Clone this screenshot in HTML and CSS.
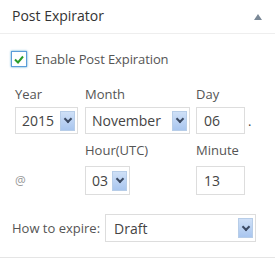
FILE: index.html
```html
<!DOCTYPE html>
<html lang="en">
<head>
    <meta charset="UTF-8">
    <title>Post Expirator</title>
    <link rel="stylesheet" href="styles.css">
</head>
<body>
    <div class="postbox">
        <div class="hndle">
            <h3>Post Expirator</h3>
            <span class="toggle"></span>
        </div>
        <div class="inside">
            <label class="enable">
                <span class="check">
                    <svg width="10" height="9" viewBox="0 0 10 9"><path d="M1 4.5 L4 7.5 L9 1.5" fill="none" stroke="#2a9d2a" stroke-width="2"/></svg>
                </span>
                Enable Post Expiration
            </label>
            <div class="date-grid">
                <div class="lbl">Year</div>
                <div class="lbl">Month</div>
                <div class="lbl">Day</div>

                <div class="select year"><span class="val">2015</span><span class="arrow"></span></div>
                <div class="select month"><span class="val">November</span><span class="arrow"></span></div>
                <div class="day-cell"><div class="input">06</div><span class="dot">.</span></div>

                <div class="lbl second"></div>
                <div class="lbl second">Hour(UTC)</div>
                <div class="lbl second">Minute</div>

                <div class="at">@</div>
                <div class="select hour"><span class="val">03</span><span class="arrow"></span></div>
                <div class="input">13</div>
            </div>
            <div class="how">
                <span class="how-lbl">How to expire:</span>
                <div class="select how-sel"><span class="val">Draft</span><span class="arrow"></span></div>
            </div>
        </div>
    </div>
</body>
</html>
```

FILE: styles.css
```css
body {
    margin: 0;
    background: #fff;
    font-family: "Open Sans", sans-serif;
    color: #444;
}
.postbox {
    width: 275px;
    height: 257px;
    border-bottom: 1px solid #e5e5e5;
}
.hndle {
    height: 34px;
    border-bottom: 1px solid #eee;
    display: flex;
    align-items: center;
    justify-content: space-between;
    padding: 0 12px;
    box-sizing: border-box;
}
.hndle h3 {
    margin: 0;
    font-size: 14px;
    font-weight: 400;
    color: #333;
    position: relative;
    top: -1px;
}
.toggle {
    width: 0;
    height: 0;
    border-left: 4px solid transparent;
    border-right: 4px solid transparent;
    border-bottom: 6px solid #7a8896;
    margin-right: 1px;
}
.inside {
    padding: 17px 0 0 11px;
}
.enable {
    display: flex;
    align-items: center;
    font-size: 13px;
    color: #555;
    height: 16px;
    letter-spacing: -0.1px;
}
.check {
    width: 14px;
    height: 14px;
    border: 1px solid #5b9dd9;
    box-shadow: 0 0 2px rgba(30, 140, 190, 0.8);
    display: flex;
    align-items: center;
    justify-content: center;
    margin-right: 8px;
    background: #fff;
}
.date-grid {
    display: grid;
    grid-template-columns: 70px 111px auto;
    margin: 18px 0 0 4px;
    align-items: center;
}
.lbl {
    font-size: 13px;
    color: #555;
    height: 22px;
    line-height: 18px;
}
.lbl.second {
    margin-top: 7px;
}
.select, .input {
    height: 27px;
    box-sizing: border-box;
    border: 1px solid #ddd;
    background: #fff;
    font-size: 14px;
    color: #444;
    display: flex;
    align-items: center;
}
.select {
    justify-content: space-between;
    padding: 0 0 0 6px;
}
.arrow {
    width: 15px;
    height: 20px;
    margin-right: 2px;
    border: 1px solid #b7cde8;
    background: linear-gradient(#cfe0f7, #a9c6ef);
    box-sizing: border-box;
    display: flex;
    align-items: center;
    justify-content: center;
}
.arrow::after {
    content: "";
    width: 4px;
    height: 4px;
    border-right: 2px solid #3b4a63;
    border-bottom: 2px solid #3b4a63;
    transform: rotate(45deg);
    margin-top: -3px;
}
.year { width: 63px; }
.month { width: 105px; }
.hour {
    width: 45px;
    height: 29px;
    margin-top: 3px;
}
.input {
    width: 49px;
    padding-left: 7px;
}
.date-grid > .input {
    height: 29px;
    margin-top: 3px;
}
.day-cell {
    display: flex;
    align-items: center;
}
.dot {
    font-size: 13px;
    margin-left: 3px;
}
.at {
    font-size: 12px;
    color: #999;
    margin-top: 3px;
}
.how {
    display: flex;
    align-items: center;
    margin-top: 19px;
}
.how-lbl {
    font-size: 13px;
    color: #555;
    margin-right: 5px;
    margin-left: 1px;
}
.how-sel {
    width: 151px;
    padding-left: 8px;
    height: 28px;
}
```
